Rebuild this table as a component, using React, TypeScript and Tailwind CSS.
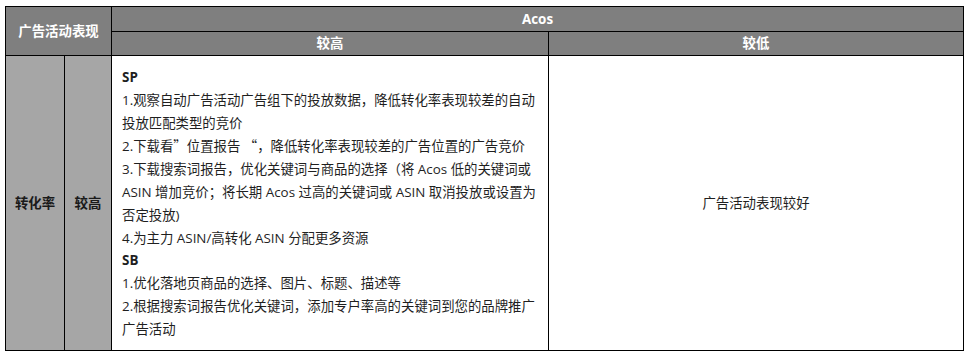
import React from "react";

const cjk = { fontFamily: '"Noto Sans CJK SC", sans-serif' };

const lines: { t: React.ReactNode; b?: boolean }[] = [
  { t: "SP", b: true },
  { t: "1.观察自动广告活动广告组下的投放数据，降低转化率表现较差的自动" },
  { t: "投放匹配类型的竞价" },
  {
    t: (
      <>
        2.下载看<span style={cjk}>”</span>位置报告 <span style={cjk}>“</span>，降低转化率表现较差的广告位置的广告竞价
      </>
    ),
  },
  { t: "3.下载搜索词报告，优化关键词与商品的选择（将 Acos 低的关键词或" },
  { t: "ASIN 增加竞价；将长期 Acos 过高的关键词或 ASIN 取消投放或设置为" },
  { t: "否定投放)" },
  { t: "4.为主力 ASIN/高转化 ASIN 分配更多资源" },
  { t: "SB", b: true },
  { t: "1.优化落地页商品的选择、图片、标题、描述等" },
  { t: "2.根据搜索词报告优化关键词，添加专户率高的关键词到您的品牌推广" },
  { t: "广告活动" },
];

export default function App() {
  return (
    <div
      className="w-[968px] h-[353px] bg-white pt-[6px] pl-[5px]"
      style={{ fontFamily: '"Open Sans", "Noto Sans CJK SC", sans-serif' }}
    >
      <table className="border-collapse border border-black w-[958px] table-fixed text-[13.4px]">
        <colgroup>
          <col className="w-[59px]" />
          <col className="w-[47px]" />
          <col className="w-[437px]" />
          <col className="w-[415px]" />
        </colgroup>
        <thead>
          <tr className="h-[25px]">
            <th
              rowSpan={2}
              colSpan={2}
              className="border border-black bg-[#7f7f7f] text-white font-bold text-center p-0"
            >
              广告活动表现
            </th>
            <th colSpan={2} className="border border-black bg-[#7f7f7f] text-white font-bold text-center p-0 leading-[24px]">
              Acos
            </th>
          </tr>
          <tr className="h-[24px]">
            <th className="border border-black bg-[#7f7f7f] text-white font-bold text-center p-0 leading-[23px]">较高</th>
            <th className="border border-black bg-[#7f7f7f] text-white font-bold text-center p-0 leading-[23px]">较低</th>
          </tr>
        </thead>
        <tbody>
          <tr>
            <td className="border border-black bg-[#a6a6a6] text-[#1a1a1a] font-bold text-center p-0">转化率</td>
            <td className="border border-black bg-[#a6a6a6] text-[#1a1a1a] font-bold text-center p-0">较高</td>
            <td className="border border-black align-top pl-[10px] pr-[6px] pt-[10px] pb-[9px] text-[#1f1f1f] leading-[22.8px]">
              {lines.map((l, i) => (
                <div key={i} className={l.b ? "font-bold whitespace-nowrap" : "whitespace-nowrap"}>
                  {l.t}
                </div>
              ))}
            </td>
            <td className="border border-black text-center text-[#1f1f1f] p-0">广告活动表现较好</td>
          </tr>
        </tbody>
      </table>
    </div>
  );
}
